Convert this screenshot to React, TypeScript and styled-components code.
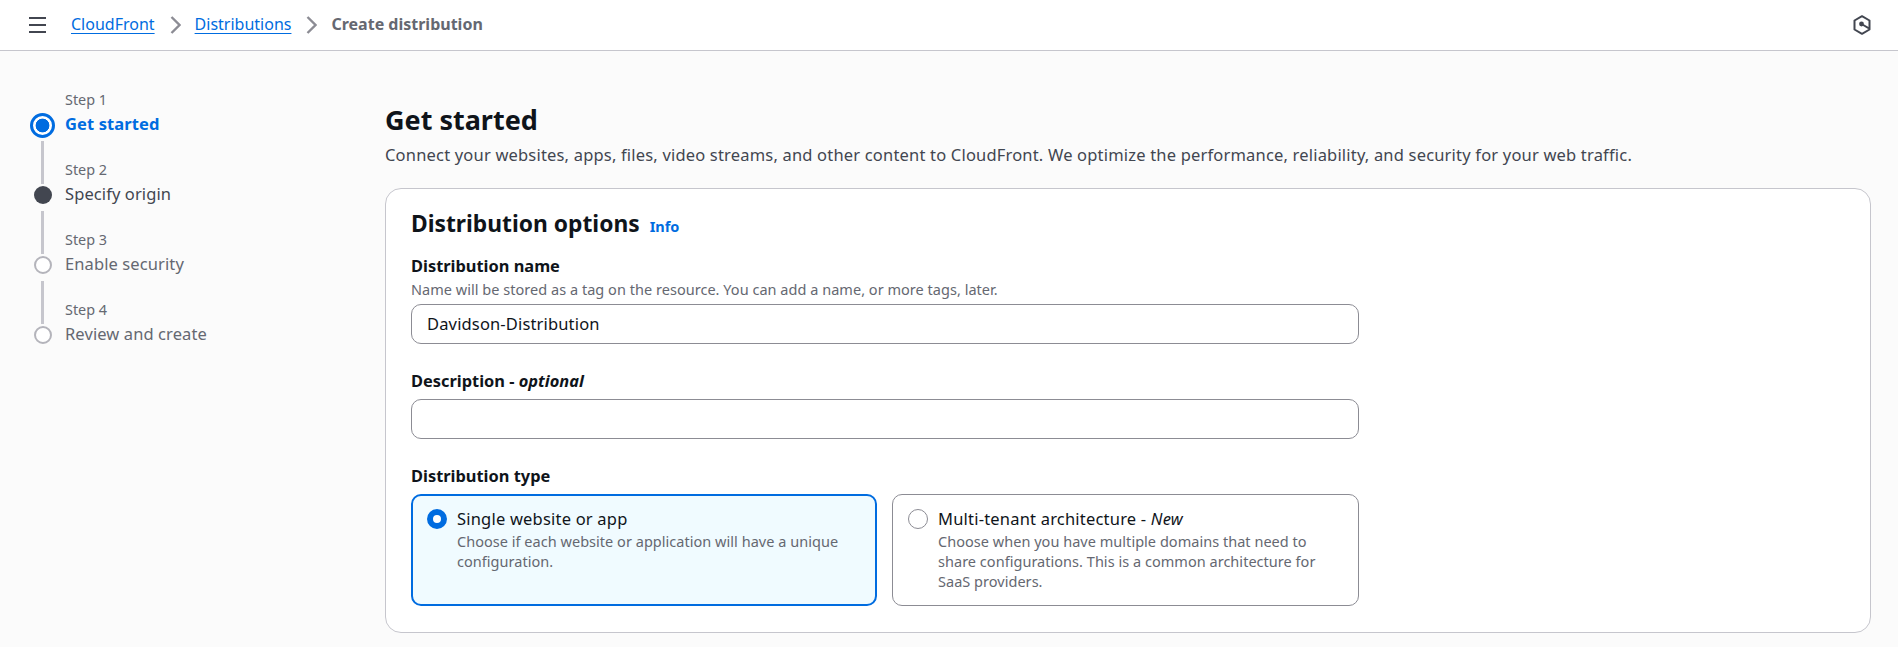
import React from "react";
import styled, { createGlobalStyle } from "styled-components";

const Global = createGlobalStyle`
  html, body { margin: 0; padding: 0; background: #fbfbfb; }
  body { font-family: "Noto Sans", "Open Sans", Arial, sans-serif; color: #0f141a; overflow: hidden; }
  * { box-sizing: border-box; }
`;

const Page = styled.div`
  width: 1898px;
  height: 647px;
  overflow: hidden;
  display: flex;
  flex-direction: column;
`;

const TopBar = styled.header`
  height: 51px;
  flex: none;
  background: #ffffff;
  border-bottom: 1px solid #c6c6cd;
  display: flex;
  align-items: center;
  padding: 0 27px 0 28px;
`;

const MenuButton = styled.span`
  display: flex;
  width: 20px;
  height: 20px;
  margin-right: 23px;
`;

const Crumbs = styled.nav`
  display: flex;
  align-items: center;
  flex: 1;
  padding-bottom: 2px;
`;

const CrumbLink = styled.a`
  font-size: 16px;
  line-height: 20px;
  color: #006ce0;
  text-decoration: underline;
  text-underline-offset: 3px;
`;

const CrumbCurrent = styled.span`
  font-size: 16px;
  line-height: 20px;
  font-weight: 700;
  color: #656871;
`;

const CrumbSep = styled.span`
  display: flex;
  width: 11px;
  height: 18px;
  margin: 2px 14px 0 15px;
`;

const Body = styled.div`
  flex: 1;
  display: flex;
  min-height: 0;
`;

const Rail = styled.aside`
  width: 385px;
  flex: none;
  padding: 16px 0 0 30px;
  display: flex;
  flex-direction: column;
`;

const Step = styled.div`
  display: grid;
  grid-template-columns: 25px 1fr;
  grid-template-rows: 46px 24px;
  column-gap: 10px;
`;

const Connector = styled.span<{ $show: boolean }>`
  justify-self: center;
  width: 3px;
  margin: 4px 0 -1px;
  background: ${(p) => (p.$show ? "#c6c6cd" : "transparent")};
`;

const StepLabel = styled.span`
  align-self: end;
  font-size: 14.4px;
  line-height: 16px;
  padding-bottom: 5px;
  color: #656871;
`;

const MarkerSlot = styled.span`
  display: flex;
  align-items: center;
  justify-content: center;
`;

const Marker = styled.span<{ $kind: "current" | "next" | "later" }>`
  display: block;
  border-radius: 50%;
  ${(p) =>
    p.$kind === "current"
      ? "width: 25px; height: 25px; border: 3px solid #006ce0; background: radial-gradient(circle, #006ce0 0 6.6px, #fff 7.2px);"
      : p.$kind === "next"
      ? "width: 18px; height: 18px; background: #424650;"
      : "width: 18px; height: 18px; border: 2px solid #b4b4bb; background: #fff;"}
`;

const StepTitle = styled.span<{ $kind: "current" | "next" | "later" }>`
  align-self: center;
  margin-top: -3px;
  font-size: 16.5px;
  letter-spacing: 0.1px;
  line-height: 24px;
  font-weight: ${(p) => (p.$kind === "current" ? 700 : 400)};
  color: ${(p) =>
    p.$kind === "current" ? "#006ce0" : p.$kind === "next" ? "#424650" : "#656871"};
`;

const Main = styled.main`
  flex: 1;
  padding: 51px 27px 0 0;
  min-width: 0;
`;

const PageTitle = styled.h1`
  margin: 0;
  font-size: 27px;
  line-height: 36px;
  font-weight: 700;
  color: #0f141a;
`;

const PageLead = styled.p`
  margin: 5px 0 0;
  font-size: 16.5px;
  letter-spacing: 0.185px;
  line-height: 24px;
  color: #424650;
  white-space: nowrap;
`;

const Card = styled.section`
  margin-top: 21px;
  height: 445px;
  background: #ffffff;
  border: 1px solid #c6c6cd;
  border-radius: 16px;
  padding: 20px 25px 0;
`;

const CardHead = styled.div`
  display: flex;
  align-items: baseline;
  gap: 10px;
`;

const CardTitle = styled.h2`
  margin: 0;
  font-size: 22.8px;
  line-height: 30px;
  font-weight: 700;
`;

const InfoLink = styled.a`
  font-size: 14.5px;
  font-weight: 700;
  color: #006ce0;
`;

const Form = styled.div`
  width: 948px;
  margin-top: 16px;
`;

const Field = styled.div<{ $gap?: number }>`
  margin-top: ${(p) => p.$gap ?? 0}px;
`;

const Label = styled.div`
  font-size: 16.4px;
  line-height: 22px;
  font-weight: 700;
  color: #0f141a;
  em { font-weight: 700; }
`;

const Hint = styled.div`
  margin-top: 4px;
  font-size: 14.5px;
  letter-spacing: 0.03px;
  line-height: 16px;
  color: #656871;
`;

const TextBox = styled.div`
  margin-top: 7px;
  height: 40px;
  border: 1px solid #8c8c94;
  border-radius: 10px;
  background: #fff;
  padding: 0 15px;
  font-size: 16.5px;
  letter-spacing: 0.15px;
  line-height: 38px;
  color: #0f141a;
`;

const Tiles = styled.div`
  display: grid;
  grid-template-columns: 466px 467px;
  gap: 15px;
  margin-top: 7px;
`;

const Tile = styled.div<{ $on?: boolean }>`
  height: 112px;
  display: grid;
  grid-template-columns: 20px 1fr;
  column-gap: 10px;
  align-content: start;
  border-radius: 10px;
  padding: ${(p) => (p.$on ? "12px 14px" : "13px 15px")};
  border: ${(p) => (p.$on ? "2px solid #006ce0" : "1px solid #8c8c94")};
  background: ${(p) => (p.$on ? "#f0fbff" : "#fff")};
`;

const Radio = styled.span<{ $on?: boolean }>`
  width: 20px;
  height: 20px;
  margin-top: 1px;
  border-radius: 50%;
  background: #fff;
  border: ${(p) => (p.$on ? "6px solid #006ce0" : "1px solid #8c8c94")};
`;

const TileBody = styled.div``;

const TileTitle = styled.div`
  font-size: 16.5px;
  letter-spacing: 0.2px;
  line-height: 22px;
  color: #0f141a;
`;

const TileText = styled.div`
  margin-top: 1px;
  font-size: 14.5px;
  letter-spacing: 0.03px;
  line-height: 20px;
  color: #656871;
`;

const steps = [
  { n: 1, title: "Get started", kind: "current" as const },
  { n: 2, title: "Specify origin", kind: "next" as const },
  { n: 3, title: "Enable security", kind: "later" as const },
  { n: 4, title: "Review and create", kind: "later" as const },
];

const Chevron = () => (
  <CrumbSep>
    <svg width="11" height="18" viewBox="0 0 11 18" fill="none" stroke="#8c8c94" strokeWidth="2.4">
      <path d="M1.5 1l8 8-8 8" />
    </svg>
  </CrumbSep>
);

export default function App() {
  return (
    <Page>
      <Global />
      <TopBar>
        <MenuButton>
          <svg width="20" height="20" viewBox="0 0 20 20" fill="none" stroke="#424650" strokeWidth="2.2">
            <path d="M1 3h17M1 10h17M1 17h17" />
          </svg>
        </MenuButton>
        <Crumbs>
          <CrumbLink>CloudFront</CrumbLink>
          <Chevron />
          <CrumbLink>Distributions</CrumbLink>
          <Chevron />
          <CrumbCurrent>Create distribution</CrumbCurrent>
        </Crumbs>
        <svg width="18" height="20" viewBox="0 0 18 20" fill="none" stroke="#424650" strokeWidth="2">
          <path d="M9 1.2l7.5 4.3v9L9 18.8l-7.5-4.3v-9z" strokeLinejoin="round" />
          <circle cx="8.5" cy="9" r="2.4" fill="#424650" stroke="none" />
          <path d="M8.5 9l7.5 4.4" strokeWidth="1.8" />
        </svg>
      </TopBar>
      <Body>
        <Rail>
          {steps.map((s, i) => (
            <Step key={s.n}>
              <Connector $show={i > 0} />
              <StepLabel>Step {s.n}</StepLabel>
              <MarkerSlot>
                <Marker $kind={s.kind} />
              </MarkerSlot>
              <StepTitle $kind={s.kind}>{s.title}</StepTitle>
            </Step>
          ))}
        </Rail>
        <Main>
          <PageTitle>Get started</PageTitle>
          <PageLead>
            Connect your websites, apps, files, video streams, and other content to CloudFront. We optimize the performance, reliability, and security for your web traffic.
          </PageLead>
          <Card>
            <CardHead>
              <CardTitle>Distribution options</CardTitle>
              <InfoLink>Info</InfoLink>
            </CardHead>
            <Form>
              <Field>
                <Label>Distribution name</Label>
                <Hint>Name will be stored as a tag on the resource. You can add a name, or more tags, later.</Hint>
                <TextBox>Davidson-Distribution</TextBox>
              </Field>
              <Field $gap={26}>
                <Label>
                  Description - <em>optional</em>
                </Label>
                <TextBox />
              </Field>
              <Field $gap={26}>
                <Label>Distribution type</Label>
                <Tiles>
                  <Tile $on>
                    <Radio $on />
                    <TileBody>
                      <TileTitle>Single website or app</TileTitle>
                      <TileText>Choose if each website or application will have a unique configuration.</TileText>
                    </TileBody>
                  </Tile>
                  <Tile>
                    <Radio />
                    <TileBody>
                      <TileTitle>
                        Multi-tenant architecture - <em>New</em>
                      </TileTitle>
                      <TileText>
                        Choose when you have multiple domains that need to share configurations. This is a common architecture for SaaS providers.
                      </TileText>
                    </TileBody>
                  </Tile>
                </Tiles>
              </Field>
            </Form>
          </Card>
        </Main>
      </Body>
    </Page>
  );
}
